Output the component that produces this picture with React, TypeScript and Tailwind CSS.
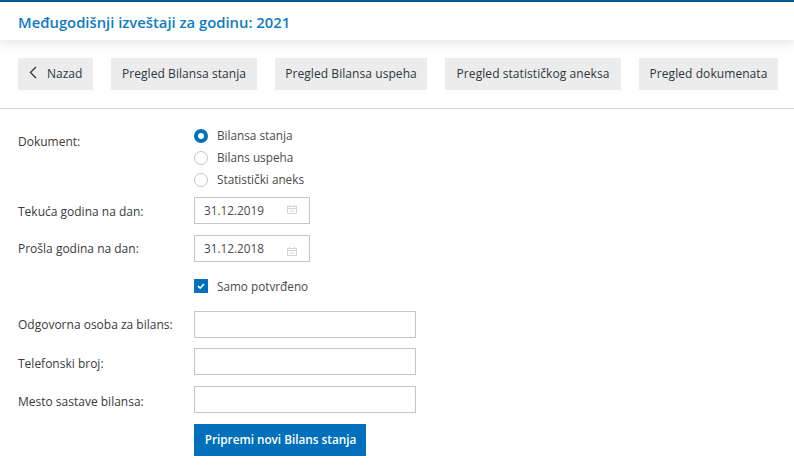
import React from 'react';

const Calendar = ({ top }: { top: string }) => (
  <svg width="10" height="9" viewBox="0 0 10 9" fill="none" stroke="#d3d6d8" strokeWidth="1" className={`absolute left-[92px] ${top}`}>
    <rect x="0.5" y="1.5" width="9" height="7" />
    <path d="M0.5 3.5h9M2.5 0v2M7.5 0v2M2.5 6h5" />
  </svg>
);

const Radio = ({ label, checked }: { label: string; checked?: boolean }) => (
  <div className="flex h-[22px] items-center gap-[9px]">
    {checked ? (
      <span className="flex h-[14px] w-[14px] items-center justify-center rounded-full bg-[#0070ba]">
        <span className="h-[6px] w-[6px] rounded-full bg-white" />
      </span>
    ) : (
      <span className="h-[14px] w-[14px] rounded-full border border-[#c6c6c6] bg-white" />
    )}
    <span className="text-[11.75px] text-[#4a4a4a]">{label}</span>
  </div>
);

const DateField = ({ value, iconTop }: { value: string; iconTop: string }) => (
  <div className="relative h-[27px] w-[116px] border border-[#c4c4c4] pl-[9px] text-[11.75px] leading-[25px] text-[#4a4a4a]">
    {value}
    <Calendar top={iconTop} />
  </div>
);

const Row = ({ label, className, labelClass, children }: { label: string; className?: string; labelClass?: string; children: React.ReactNode }) => (
  <div className={`flex ${className ?? ''}`}>
    <div className={`w-[176px] shrink-0 ${labelClass ?? ''}`}>{label}</div>
    {children}
  </div>
);

const tabs = [
  { label: 'Pregled Bilansa stanja', width: 'w-[146px]' },
  { label: 'Pregled Bilansa uspeha', width: 'w-[152px]' },
  { label: 'Pregled statističkog aneksa', width: 'w-[176px]' },
  { label: 'Pregled dokumenata', width: 'w-[139px]' },
];

const people = [
  { label: 'Odgovorna osoba za bilans:', margin: 'mt-[18px]', labelClass: '' },
  { label: 'Telefonski broj:', margin: 'mt-[10px]', labelClass: 'pt-[4px]' },
  { label: 'Mesto sastave bilansa:', margin: 'mt-[11px]', labelClass: 'pt-[4px]' },
];

export default function App() {
  return (
    <div className="h-[467px] w-[794px] overflow-hidden bg-white font-['Open_Sans',sans-serif] text-[12px] text-[#3a3a3a]">
      <header className="relative h-[40px] border-t-2 border-[#005a8f] bg-white pl-[18px] pt-[11px] shadow-[0_2px_14px_rgba(0,0,0,0.13)]">
        <h1 className="text-[14.8px] font-semibold leading-[19px] text-[#0e7cc1]">Međugodišnji izveštaji za godinu: 2021</h1>
      </header>

      <nav className="flex h-[69px] items-start gap-[18px] border-b border-[#d6d6d6] pl-[18px] pt-[18px]">
        <button className="flex h-[32px] w-[75px] items-center bg-[#ececec] pl-[11px] text-[#2d3640]">
          <svg width="9" height="13" viewBox="0 0 9 13" fill="none" stroke="#333" strokeWidth="1.3" className="mb-[3px]">
            <path d="M7 1L1.5 6.5 7 12" />
          </svg>
          <span className="ml-[9px]">Nazad</span>
        </button>
        {tabs.map((t) => (
          <button key={t.label} className={`h-[32px] bg-[#ececec] tracking-[0.07px] text-[#2d3640] ${t.width}`}>
            {t.label}
          </button>
        ))}
      </nav>

      <main className="pl-[18px]">
        <Row label="Dokument:" className="pt-[16px]" labelClass="pt-[8px]">
          <div>
            <Radio label="Bilansa stanja" checked />
            <Radio label="Bilans uspeha" />
            <Radio label="Statistički aneks" />
          </div>
        </Row>
        <Row label="Tekuća godina na dan:" className="mt-[6px] items-center" labelClass="pt-[2px]">
          <DateField value="31.12.2019" iconTop="top-[7px]" />
        </Row>
        <Row label="Prošla godina na dan:" className="mt-[11px] items-center">
          <DateField value="31.12.2018" iconTop="top-[11px]" />
        </Row>
        <div className="ml-[176px] mt-[17px] flex h-[14px] items-center gap-[9px]">
          <span className="flex h-[14px] w-[14px] items-center justify-center bg-[#0070ba]">
            <svg width="10" height="10" viewBox="0 0 10 10" fill="none" stroke="#fff" strokeWidth="1.6">
              <path d="M2 5l2.2 2.2L8 3" />
            </svg>
          </span>
          <span className="pt-[2px] text-[11.75px] text-[#4a4a4a]">Samo potvrđeno</span>
        </div>
        {people.map((p) => (
          <Row key={p.label} label={p.label} className={`items-center ${p.margin}`} labelClass={p.labelClass}>
            <div className="h-[27px] w-[222px] border border-[#c4c4c4]" />
          </Row>
        ))}
        <button className="ml-[176px] mt-[11px] h-[32px] w-[172px] bg-[#0070ba] pl-[1px] text-[11.75px] font-semibold text-white">
          Pripremi novi Bilans stanja
        </button>
      </main>
    </div>
  );
}
